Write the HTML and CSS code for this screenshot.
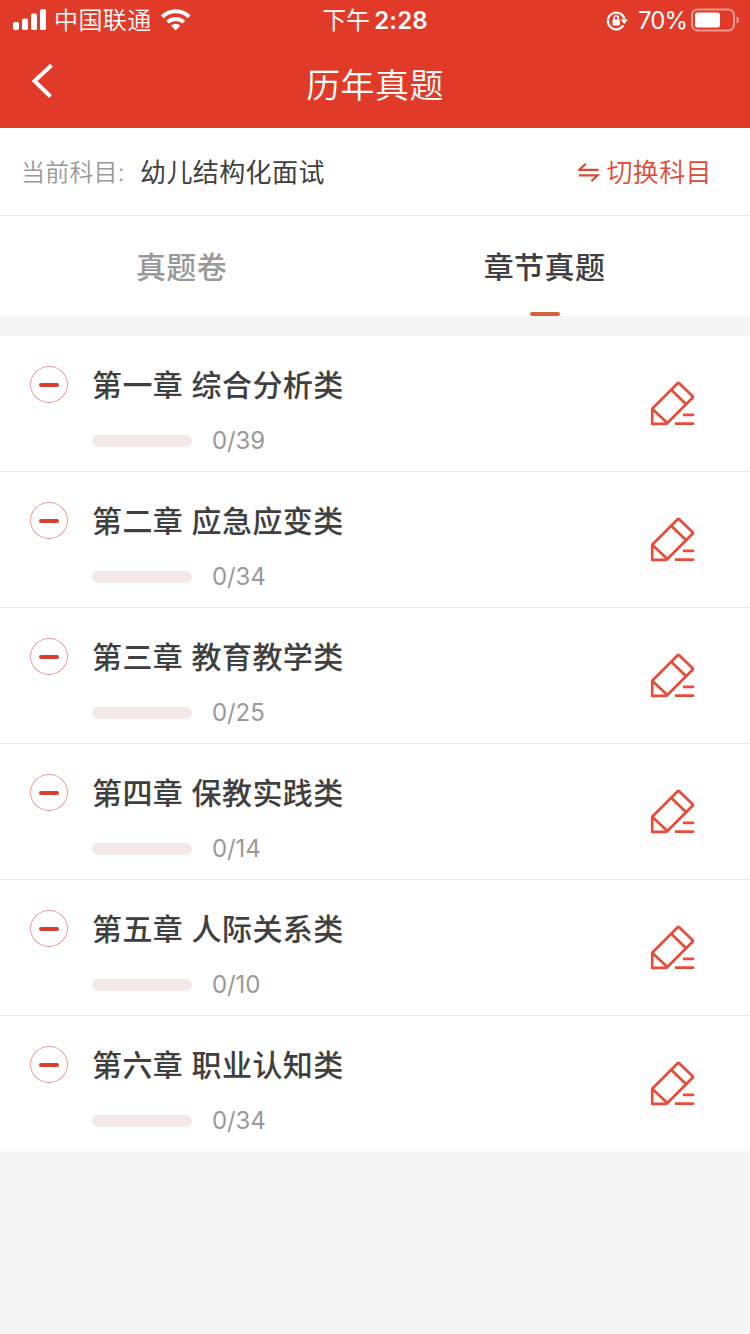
FILE: index.html
```html
<!DOCTYPE html>
<html lang="zh-CN">
<head>
<meta charset="utf-8">
<title>历年真题</title>
<link rel="stylesheet" href="styles.css">
</head>
<body>
<svg class="defs" width="0" height="0" aria-hidden="true">
  <symbol id="pencil" viewBox="0 0 46 46">
    <path d="M2.2 27.8 27.7 2.3Q28.4 1.6 29.1 2.3L42.6 15.3Q43.3 16 42.6 16.8L16.6 42.8H2.2ZM2.2 27.8 17.6 42.2M21.2 8.8 36.2 23.3M34 33.8h9M26 42.7h17"/>
  </symbol>
</svg>
<header class="top">
  <div class="status">
    <div class="status-left">
      <svg class="signal" width="34" height="22" viewBox="0 0 34 22"><rect x="0" y="13" width="6" height="8" rx="1.8"/><rect x="9" y="9.5" width="6" height="11.5" rx="1.8"/><rect x="18" y="4.5" width="6" height="16.5" rx="1.8"/><rect x="27" y="0" width="6" height="21" rx="1.8"/></svg>
      <span class="carrier">中国联通</span>
      <svg class="wifi" width="32" height="24" viewBox="0 0 32 24"><path class="arc" d="M2.2 8.7C10 1.3 21.4 1.3 29.2 8.7M7.6 14.1C12.1 9.8 19.3 9.8 23.8 14.1"/><path class="dot" d="M11 17.5Q15.7 14 20.4 17.5L15.7 22.4Z"/></svg>
    </div>
    <div class="time"><span>下午</span><b>2:28</b></div>
    <div class="status-right">
      <svg class="lock" width="22" height="22" viewBox="0 0 22 22"><path class="ring" d="M17.4 15.4A8.4 8.4 0 1 1 18.4 9"/><path class="solid" d="M14.6 9.4H22L18.3 13.9Z"/><rect class="solid" x="6.5" y="9.6" width="7.4" height="5.8" rx=".8"/><path class="shackle" d="M8.1 10V7.8a2.1 2.1 0 0 1 4.2 0V10"/></svg>
      <span class="percent">70%</span>
      <svg class="battery" width="48" height="24" viewBox="0 0 48 24"><rect class="shell" x="1" y="1.5" width="42" height="21" rx="5.5"/><rect class="charge" x="4" y="4.5" width="25" height="15" rx="2.5"/><path class="cap" d="M45.5 8.5Q48 9 48 12T45.5 15.5Z"/></svg>
    </div>
  </div>
  <div class="nav">
    <svg class="back" width="24" height="38" viewBox="0 0 24 38"><path d="M20.5 3.2 3.5 19l16 15.5"/></svg>
    <h1>历年真题</h1>
  </div>
</header>
<section class="subject">
  <span class="label">当前科目:</span>
  <span class="name">幼儿结构化面试</span>
  <a class="switch"><svg width="22" height="22" viewBox="0 0 22 22"><path d="M7.8 1.8 1.4 7.8H20.5M1 13.3H19.6L13.4 19.2"/></svg><span>切换科目</span></a>
</section>
<nav class="tabs">
  <div class="tab">真题卷</div>
  <div class="tab active">章节真题</div>
</nav>
<main class="chapters">
  <article class="row"><i class="minus"></i><div class="info"><h2>第一章 综合分析类</h2><div class="progress"><i class="bar"></i><span>0/39</span></div></div><svg class="pencil"><use href="#pencil"/></svg></article>
  <article class="row"><i class="minus"></i><div class="info"><h2>第二章 应急应变类</h2><div class="progress"><i class="bar"></i><span>0/34</span></div></div><svg class="pencil"><use href="#pencil"/></svg></article>
  <article class="row"><i class="minus"></i><div class="info"><h2>第三章 教育教学类</h2><div class="progress"><i class="bar"></i><span>0/25</span></div></div><svg class="pencil"><use href="#pencil"/></svg></article>
  <article class="row"><i class="minus"></i><div class="info"><h2>第四章 保教实践类</h2><div class="progress"><i class="bar"></i><span>0/14</span></div></div><svg class="pencil"><use href="#pencil"/></svg></article>
  <article class="row"><i class="minus"></i><div class="info"><h2>第五章 人际关系类</h2><div class="progress"><i class="bar"></i><span>0/10</span></div></div><svg class="pencil"><use href="#pencil"/></svg></article>
  <article class="row"><i class="minus"></i><div class="info"><h2>第六章 职业认知类</h2><div class="progress"><i class="bar"></i><span>0/34</span></div></div><svg class="pencil"><use href="#pencil"/></svg></article>
</main>
</body>
</html>
```

FILE: styles.css
```css
* { box-sizing: border-box; }
body {
  margin: 0;
  min-height: 1334px;
  background: #f5f5f5;
  color: #404040;
  font-family: Inter, "Noto Sans CJK SC", sans-serif;
}
h1, h2 { margin: 0; }
svg { display: block; flex: none; fill: none; }
.defs { position: absolute; }

.top { height: 128px; background: #e23a29; color: #fff; }
.status {
  display: grid;
  grid-template-columns: 1fr auto 1fr;
  height: 40px;
  padding: 0 11px 0 13px;
  align-items: center;
  font-size: 24px;
  line-height: 38px;
}
.status-left, .status-right, .time { display: flex; align-items: center; }
.status-right { justify-content: flex-end; }
.signal { fill: #fff; }
.carrier { margin-left: 7px; padding-top: 2px; letter-spacing: .4px; font-weight: 350; }
.wifi { margin-left: 8px; }
.wifi .arc { stroke: #fff; stroke-width: 4; }
.wifi .dot { fill: #fff; }
.time { gap: 4px; margin-left: -2px; padding-top: 2px; }
.time b { font-weight: 600; letter-spacing: .2px; }
.lock { margin-top: 1px; }
.lock .ring { stroke: #fff; stroke-width: 2.2; }
.lock .shackle { stroke: #fff; stroke-width: 1.5; }
.lock .solid { fill: #fff; }
.percent { margin: 0 4px 0 10px; padding-top: 2px; font-size: 24px; letter-spacing: -1px; }
.battery .shell { stroke: #f29a90; stroke-width: 2; }
.battery .charge { fill: #fff; }
.battery .cap { fill: #f29a90; }

.nav {
  display: grid;
  grid-template-columns: 1fr auto 1fr;
  height: 88px;
  padding: 0 31px;
  align-items: center;
}
.back { margin-top: -6px; stroke: #fff; stroke-width: 4; }
.nav h1 { padding-top: 3px; font-size: 34px; line-height: 84px; font-weight: 350; letter-spacing: .4px; }

.subject {
  display: flex;
  align-items: center;
  height: 88px;
  padding: 2px 38px 0 21px;
  background: #fff;
  border-bottom: 1px solid #ebebeb;
  line-height: 40px;
}
.label { width: 119px; color: #999; font-size: 24px; font-weight: 350; letter-spacing: .2px; }
.name { font-size: 26px; letter-spacing: .4px; }
.switch { display: flex; align-items: center; gap: 6px; margin-left: auto; color: #df4b31; font-size: 26px; font-weight: 350; letter-spacing: .4px; }
.switch svg { stroke: #d94b34; stroke-width: 2.2; }

.tabs { display: flex; height: 100px; padding-right: 22px; background: #fff; font-size: 30px; font-weight: 500; letter-spacing: .4px; }
.tab {
  display: flex;
  flex-direction: column;
  align-items: center;
  width: 363px;
  line-height: 102px;
  color: #999;
}
.active { color: #404040; }
.active::after { content: ""; width: 30px; height: 4px; margin-top: -6px; border-radius: 2px; background: #d9603f; }

.chapters { margin-top: 20px; background: #fff; }
.row { display: flex; height: 136px; padding: 0 54px 0 30px; border-bottom: 1px solid #ebebeb; }
.row:last-child { height: 135px; border: 0; }
.minus {
  display: grid;
  place-items: center;
  width: 38px;
  height: 37px;
  margin: 30px 24px 0 0;
  border: 1px solid #e99b9b;
  border-radius: 50%;
}
.minus::before { content: ""; width: 20px; height: 4px; border-radius: 2px; background: #d83e30; }
.info { flex: 1; padding-top: 27px; }
.info h2 { font-size: 30px; line-height: 44px; font-weight: 500; letter-spacing: .4px; }
.progress { display: flex; align-items: center; gap: 20px; height: 30px; margin-top: 19px; color: #999; font-size: 24px; line-height: 30px; letter-spacing: -.1px; }
.bar { width: 100px; height: 12px; border-radius: 6px; background: #f5e8e8; }
.pencil { width: 46px; height: 46px; margin-top: 45px; stroke: #ea4b38; stroke-width: 2.7; stroke-linejoin: round; stroke-linecap: round; }
```
